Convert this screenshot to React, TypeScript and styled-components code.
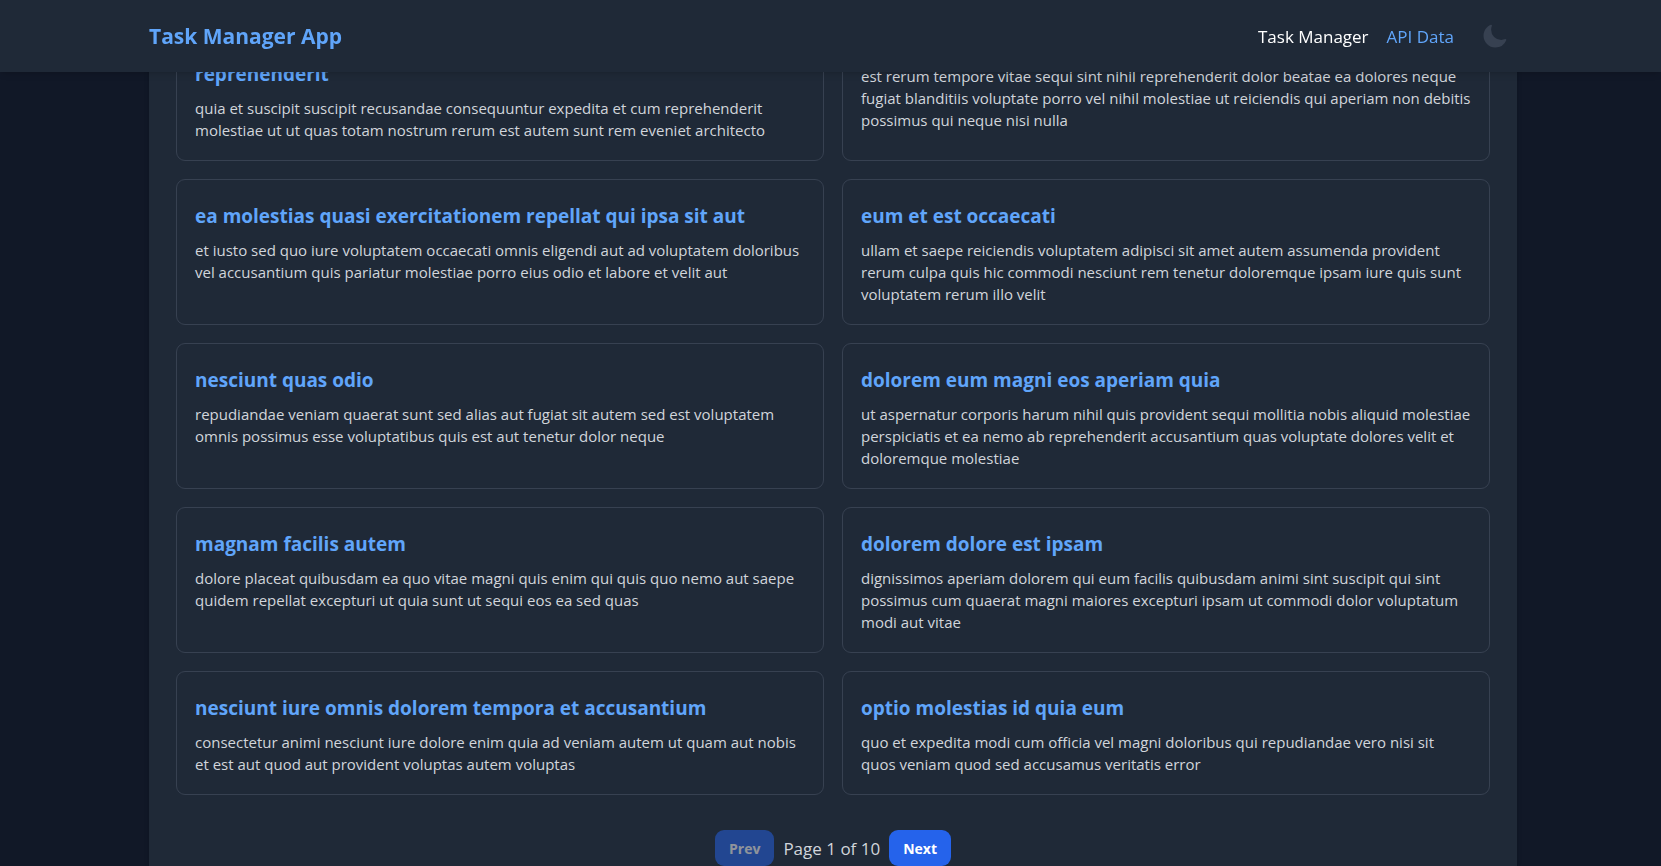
import React from "react";
import styled, { createGlobalStyle } from "styled-components";

const GlobalStyle = createGlobalStyle`
  *, *::before, *::after { box-sizing: border-box; }
  body {
    margin: 0;
    background: #111827;
    color: #d1d5db;
    font-family: "Segoe UI", "Open Sans", "Noto Sans", sans-serif;
    font-size: 17px;
    line-height: 27px;
  }
`;

const Header = styled.header`
  position: fixed;
  inset: 0 0 auto;
  z-index: 10;
  padding-left: 5px;
  background: #1f2937;
  box-shadow: 0 4px 6px -1px rgba(0, 0, 0, 0.1), 0 2px 4px -2px rgba(0, 0, 0, 0.1);
`;

const HeaderInner = styled.div`
  display: flex;
  align-items: center;
  justify-content: space-between;
  max-width: 1368px;
  height: 72px;
  margin: 0 auto;
`;

const Brand = styled.h1`
  margin: 0;
  color: #60a5fa;
  font-size: 21px;
  font-weight: 700;
  line-height: 32px;
`;

const Nav = styled.nav`
  display: flex;
  align-items: center;
  gap: 18px;
`;

const NavLink = styled.a<{ $active?: boolean }>`
  color: ${(p) => (p.$active ? "#60a5fa" : "#ffffff")};
  text-decoration: none;
`;

const ThemeButton = styled.button`
  display: flex;
  padding: 9px;
  border: 0;
  border-radius: 9px;
  background: transparent;
  color: #374151;
  cursor: pointer;
`;

const Page = styled.div`
  padding-left: 5px;
`;

const Panel = styled.main`
  max-width: 1368px;
  min-height: 100vh;
  margin: 0 auto;
  padding: 5px 27px 0;
  background: #1f2937;
  box-shadow: 0 4px 6px -1px rgba(0, 0, 0, 0.1), 0 2px 4px -2px rgba(0, 0, 0, 0.1);
`;

const Posts = styled.div`
  display: grid;
  grid-template-columns: repeat(2, minmax(0, 1fr));
  gap: 18px;
`;

const Card = styled.article`
  padding: 20px 18px 19px;
  border: 1px solid #374151;
  border-radius: 9px;
`;

const CardTitle = styled.h2`
  margin: 0 0 7px;
  color: #60a5fa;
  font-size: 19px;
  font-weight: 700;
  line-height: 32px;
`;

const CardText = styled.p`
  margin: 0;
  font-size: 15px;
  line-height: 22px;
`;

const Pagination = styled.div`
  display: flex;
  align-items: center;
  justify-content: center;
  gap: 9px;
  margin-top: 35px;
`;

const PageButton = styled.button`
  height: 36px;
  padding: 0 14px;
  border: 0;
  border-radius: 9px;
  background: #2563eb;
  color: #ffffff;
  font-family: inherit;
  font-size: 14px;
  font-weight: 700;
  cursor: pointer;

  &:disabled {
    opacity: 0.5;
    cursor: not-allowed;
  }
`;

const posts = [
  {
    title: "sunt aut facere repellat provident occaecati excepturi optio reprehenderit",
    body: "quia et suscipit suscipit recusandae consequuntur expedita et cum reprehenderit molestiae ut ut quas totam nostrum rerum est autem sunt rem eveniet architecto",
  },
  {
    title: "qui est esse",
    body: "est rerum tempore vitae sequi sint nihil reprehenderit dolor beatae ea dolores neque fugiat blanditiis voluptate porro vel nihil molestiae ut reiciendis qui aperiam non debitis possimus qui neque nisi nulla",
  },
  {
    title: "ea molestias quasi exercitationem repellat qui ipsa sit aut",
    body: "et iusto sed quo iure voluptatem occaecati omnis eligendi aut ad voluptatem doloribus vel accusantium quis pariatur molestiae porro eius odio et labore et velit aut",
  },
  {
    title: "eum et est occaecati",
    body: "ullam et saepe reiciendis voluptatem adipisci sit amet autem assumenda provident rerum culpa quis hic commodi nesciunt rem tenetur doloremque ipsam iure quis sunt voluptatem rerum illo velit",
  },
  {
    title: "nesciunt quas odio",
    body: "repudiandae veniam quaerat sunt sed alias aut fugiat sit autem sed est voluptatem omnis possimus esse voluptatibus quis est aut tenetur dolor neque",
  },
  {
    title: "dolorem eum magni eos aperiam quia",
    body: "ut aspernatur corporis harum nihil quis provident sequi mollitia nobis aliquid molestiae perspiciatis et ea nemo ab reprehenderit accusantium quas voluptate dolores velit et doloremque molestiae",
  },
  {
    title: "magnam facilis autem",
    body: "dolore placeat quibusdam ea quo vitae magni quis enim qui quis quo nemo aut saepe quidem repellat excepturi ut quia sunt ut sequi eos ea sed quas",
  },
  {
    title: "dolorem dolore est ipsam",
    body: "dignissimos aperiam dolorem qui eum facilis quibusdam animi sint suscipit qui sint possimus cum quaerat magni maiores excepturi ipsam ut commodi dolor voluptatum modi aut vitae",
  },
  {
    title: "nesciunt iure omnis dolorem tempora et accusantium",
    body: "consectetur animi nesciunt iure dolore enim quia ad veniam autem ut quam aut nobis et est aut quod aut provident voluptas autem voluptas",
  },
  {
    title: "optio molestias id quia eum",
    body: "quo et expedita modi cum officia vel magni doloribus qui repudiandae vero nisi sit quos veniam quod sed accusamus veritatis error",
  },
];

const MoonIcon = () => (
  <svg width="27" height="27" viewBox="0 0 24 24" fill="currentColor" aria-hidden="true">
    <path
      fillRule="evenodd"
      clipRule="evenodd"
      d="M9.528 1.718a.75.75 0 0 1 .162.819A8.97 8.97 0 0 0 9 6a9 9 0 0 0 9 9 8.97 8.97 0 0 0 3.463-.69.75.75 0 0 1 .981.98 10.503 10.503 0 0 1-9.694 6.46c-5.799 0-10.5-4.7-10.5-10.5 0-4.368 2.667-8.112 6.46-9.694a.75.75 0 0 1 .818.162Z"
    />
  </svg>
);

export default function App() {
  return (
    <>
      <GlobalStyle />
      <Header>
        <HeaderInner>
          <Brand>Task Manager App</Brand>
          <Nav>
            <NavLink href="#tasks">Task Manager</NavLink>
            <NavLink href="#api" $active>
              API Data
            </NavLink>
            <ThemeButton type="button" aria-label="Toggle theme">
              <MoonIcon />
            </ThemeButton>
          </Nav>
        </HeaderInner>
      </Header>
      <Page>
        <Panel>
          <Posts>
            {posts.map((post) => (
              <Card key={post.title}>
                <CardTitle>{post.title}</CardTitle>
                <CardText>{post.body}</CardText>
              </Card>
            ))}
          </Posts>
          <Pagination>
            <PageButton type="button" disabled>
              Prev
            </PageButton>
            <span>Page 1 of 10</span>
            <PageButton type="button">Next</PageButton>
          </Pagination>
        </Panel>
      </Page>
    </>
  );
}
